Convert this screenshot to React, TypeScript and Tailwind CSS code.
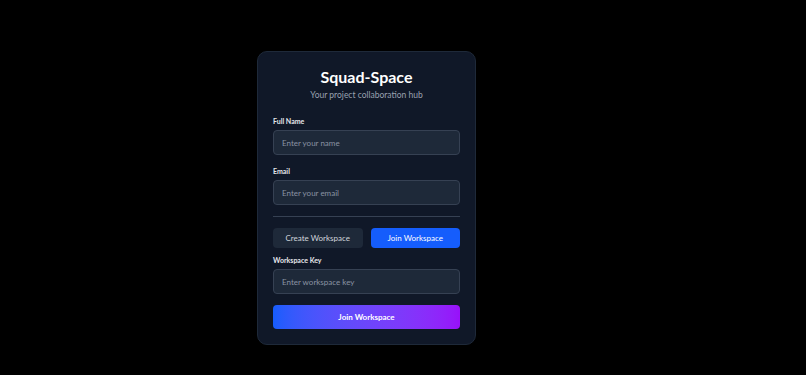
import React from "react";

export default function App() {
  return (
    <div className="w-full h-[375px] bg-black overflow-hidden" style={{ fontFamily: 'Lato, "Noto Sans", sans-serif' }}>
      <div className="ml-[257px] pt-[51px]">
        <div className="w-[219px] rounded-[10px] border border-[#1e2939] bg-[#101828] px-[15px] pt-[15px] pb-[15px] shadow-lg">
          <div className="text-center">
            <h1 className="text-[16px] leading-[20px] font-bold text-white">Squad-Space</h1>
            <p className="mt-[2px] text-[8.5px] leading-[12px] text-[#99a1af]">Your project collaboration hub</p>
          </div>

          <div className="mt-[15px]">
            <label className="block text-[7px] leading-[10px] font-bold text-[#e5e7eb]">Full Name</label>
            <input
              className="mt-[4px] block w-full h-[25px] rounded-[4px] border border-[#364153] bg-[#1e2939] px-[8px] text-[8px] text-white placeholder:text-[#8a93a3] outline-none"
              placeholder="Enter your name"
            />
          </div>

          <div className="mt-[11px]">
            <label className="block text-[7px] leading-[10px] font-bold text-[#e5e7eb]">Email</label>
            <input
              className="mt-[4px] block w-full h-[25px] rounded-[4px] border border-[#364153] bg-[#1e2939] px-[8px] text-[8px] text-white placeholder:text-[#8a93a3] outline-none"
              placeholder="Enter your email"
            />
          </div>

          <div className="mt-[11px] h-px bg-[#364153]" />

          <div className="mt-[11px] grid grid-cols-2 gap-[8px]">
            <button className="h-[20px] rounded-[4px] bg-[#1e2939] text-[8px] text-[#d1d5dc]">Create Workspace</button>
            <button className="h-[20px] rounded-[4px] bg-[#155dfc] text-[8px] text-white">Join Workspace</button>
          </div>

          <div className="mt-[7px]">
            <label className="block text-[7px] leading-[10px] font-bold text-[#e5e7eb]">Workspace Key</label>
            <input
              className="mt-[4px] block w-full h-[25px] rounded-[4px] border border-[#364153] bg-[#1e2939] px-[8px] text-[8px] text-white placeholder:text-[#8a93a3] outline-none"
              placeholder="Enter workspace key"
            />
          </div>

          <button className="mt-[11px] w-full h-[24px] rounded-[4px] bg-gradient-to-r from-[#155dfc] to-[#9810fa] text-[8px] font-bold text-white">
            Join Workspace
          </button>
        </div>
      </div>
    </div>
  );
}
